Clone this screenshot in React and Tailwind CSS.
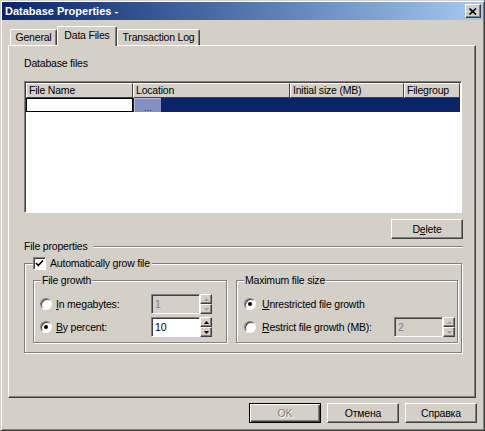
import React from 'react';

const raised =
  "border border-t-white border-l-white border-r-[#404040] border-b-[#404040] shadow-[inset_-1px_-1px_0_#808080]";
const sunken =
  "border border-t-[#808080] border-l-[#808080] border-r-white border-b-white shadow-[inset_1px_1px_0_#404040]";
const etched = "border border-[#808080] shadow-[inset_1px_1px_0_white,1px_1px_0_white]";

function Radio({ checked }) {
  return (
    <span className="w-[12px] h-[12px] rounded-full bg-white border border-t-[#808080] border-l-[#808080] border-r-white border-b-white shadow-[inset_1px_1px_0_#404040] flex items-center justify-center shrink-0">
      {checked && <span className="w-[4px] h-[4px] rounded-full bg-black" />}
    </span>
  );
}

function Spin({ disabled }) {
  const c = disabled ? "#a0a0a0" : "#000000";
  return (
    <div className="flex flex-col w-[12px]">
      {[0, 1].map((i) => (
        <div key={i} className={`h-[10px] bg-[#d4d0c8] flex items-center justify-center ${raised}`}>
          <svg width="5" height="3" viewBox="0 0 5 3">
            {i === 0 ? <path d="M2.5 0 L5 3 L0 3 Z" fill={c} /> : <path d="M0 0 L5 0 L2.5 3 Z" fill={c} />}
          </svg>
        </div>
      ))}
    </div>
  );
}

function SpinEdit({ value, disabled }) {
  return (
    <div className="flex">
      <div
        className={`w-[49px] h-[20px] flex items-center pl-[3px] ${sunken} ${
          disabled ? "bg-[#d4d0c8] text-[#808080]" : "bg-white text-black"
        }`}
      >
        {value}
      </div>
      <Spin disabled={disabled} />
    </div>
  );
}

function Group({ label, className, children }) {
  return (
    <div className={`relative ${etched} ${className}`}>
      <span className="absolute -top-[7px] left-[7px] bg-[#d4d0c8] px-[1px] leading-[13px]">{label}</span>
      {children}
    </div>
  );
}

function Button({ children, className = "", disabled, isDefault }) {
  return (
    <div
      className={`h-[20px] w-[72px] bg-[#d4d0c8] flex items-center justify-center ${
        isDefault
          ? "border border-black shadow-[inset_1px_1px_0_white,inset_-1px_-1px_0_#404040,inset_-2px_-2px_0_#808080]"
          : raised
      } ${disabled ? "text-[#808080] [text-shadow:1px_1px_0_white]" : ""} ${className}`}
    >
      {children}
    </div>
  );
}

function Tab({ label, active, className }) {
  return (
    <div
      className={`bg-[#d4d0c8] rounded-t-[2px] border-t border-l border-r border-t-white border-l-white border-r-[#404040] shadow-[inset_-1px_0_0_#808080] flex items-center justify-center ${
        active ? "h-[20px] relative z-10 -mb-[1px] pb-[2px]" : "h-[16px]"
      } ${className}`}
    >
      {label}
    </div>
  );
}

export default function App() {
  return (
    <div className="w-[485px] h-[431px] bg-[#d4d0c8] border border-t-[#d4d0c8] border-l-[#d4d0c8] border-r-[#404040] border-b-[#404040] shadow-[inset_1px_1px_0_white,inset_-1px_-1px_0_#808080] p-[1px] font-['Liberation_Sans',sans-serif] text-[10.5px] tracking-[-0.2px] leading-[13px] text-black select-none">
      {/* title bar */}
      <div className="h-[18px] bg-linear-to-r from-[#0a246a] to-[#a6caf0] flex items-center pl-[3px] pr-[2px]">
        <span className="text-white font-bold text-[11px] tracking-normal">Database Properties -</span>
        <div className={`ml-auto w-[16px] h-[14px] bg-[#d4d0c8] flex items-center justify-center ${raised}`}>
          <svg width="8" height="7" viewBox="0 0 8 7">
            <path d="M0.5 0.5 L7 6.5 M7 0.5 L0.5 6.5" stroke="black" strokeWidth="1.6" />
          </svg>
        </div>
      </div>

      <div className="px-[6px]">
        {/* tabs */}
        <div className="mt-[4px] pl-[2px] flex items-end h-[21px]">
          <Tab label="General" className="w-[47px]" />
          <Tab label="Data Files" active className="w-[60px]" />
          <Tab label="Transaction Log" className="w-[83px]" />
        </div>

        {/* tab panel */}
        <div className={`w-[468px] h-[353px] ${raised} pt-[11px] pl-[15px]`}>
          <div>Database files</div>

          {/* grid */}
          <div className={`mt-[11px] w-[438px] h-[132px] bg-white ${sunken} p-[1px] flex flex-col`}>
            <div className="flex h-[15px] shrink-0">
              {[
                ["File Name", "w-[107px]"],
                ["Location", "w-[157px]"],
                ["Initial size (MB)", "w-[114px]"],
                ["Filegroup", "w-[56px]"],
              ].map(([t, w]) => (
                <div
                  key={t}
                  className={`${w} bg-[#d4d0c8] border-t border-l border-r border-b border-t-white border-l-white border-r-[#404040] border-b-[#404040] pl-[2px] flex items-center`}
                >
                  {t}
                </div>
              ))}
            </div>
            <div className="flex h-[14px] bg-[#0a246a]">
              <div className="w-[107px] bg-white border border-black" />
              <div className="w-[157px] flex pl-[1px]">
                <div className="w-[27px] h-full bg-[#8390c3] border-l border-t border-[#b4bedf] flex items-end justify-center text-[#2a3470] leading-[10px]">
                  ...
                </div>
              </div>
            </div>
          </div>

          <div className="w-[439px] flex justify-end mt-[6px]">
            <Button className="w-[71px]">
              <span>
                D<u>e</u>lete
              </span>
            </Button>
          </div>

          <div className="w-[439px] flex items-center mt-[1px] h-[13px]">
            <span>File properties</span>
            <div className="flex-1 ml-[5px] border-t border-t-[#808080] border-b border-b-white" />
          </div>

          {/* automatically grow file */}
          <div className={`relative mt-[10px] w-[438px] h-[90px] ${etched} pt-[16px] pl-[8px] flex gap-[9px]`}>
            <div className="absolute -top-[7px] left-[8px] bg-[#d4d0c8] flex items-center gap-[4px] pr-[2px]">
              <span className={`w-[13px] h-[13px] bg-white ${sunken} flex items-center justify-center`}>
                <svg width="9" height="9" viewBox="0 0 9 9">
                  <path d="M1 4 L3.3 6.5 L8 1.5" stroke="black" strokeWidth="1.7" fill="none" />
                </svg>
              </span>
              <span>Automatically grow file</span>
            </div>

            <Group label="File growth" className="w-[194px] h-[63px] pl-[6px] pt-[13px]">
              <div className="flex items-center h-[20px]">
                <Radio />
                <span className="ml-[4px] w-[95px]">
                  <u>I</u>n megabytes:
                </span>
                <SpinEdit value="1" disabled />
              </div>
              <div className="flex items-center h-[20px] mt-[3px]">
                <Radio checked />
                <span className="ml-[4px] w-[95px]">
                  <u>B</u>y percent:
                </span>
                <SpinEdit value="10" />
              </div>
            </Group>

            <Group label="Maximum file size" className="w-[222px] h-[63px] pl-[7px] pt-[13px]">
              <div className="flex items-center h-[20px]">
                <Radio checked />
                <span className="ml-[6px]">
                  <u>U</u>nrestricted file growth
                </span>
              </div>
              <div className="flex items-center h-[20px] mt-[3px]">
                <Radio />
                <span className="ml-[6px] w-[132px]">
                  <u>R</u>estrict file growth (MB):
                </span>
                <SpinEdit value="2" disabled />
              </div>
            </Group>
          </div>
        </div>

        {/* dialog buttons */}
        <div className="mt-[5px] flex justify-end gap-[6px]">
          <Button disabled isDefault>
            OK
          </Button>
          <Button>Отмена</Button>
          <Button>Справка</Button>
        </div>
      </div>
    </div>
  );
}
